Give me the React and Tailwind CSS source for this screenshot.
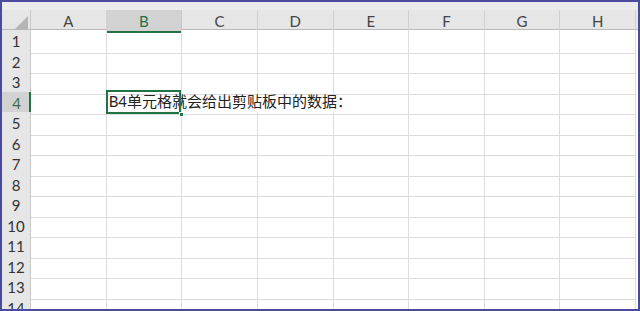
import React from "react";

const cols = ["A", "B", "C", "D", "E", "F", "G", "H"];
const rows = Array.from({ length: 14 }, (_, i) => i + 1);

const gridCols = "grid grid-cols-[29px_repeat(8,75.625px)]";

const HeaderRow = () => (
  <div className={`${gridCols} h-[20px] bg-[#e6e6e6] border-b border-[#b8b8b8]`}>
    <div className="relative border-r border-[#c8c8c8]">
      <svg className="absolute right-[2px] bottom-[3px]" width="14" height="14" viewBox="0 0 14 14">
        <polygon points="14,0 14,14 0,14" fill="#b5b5b5" />
      </svg>
    </div>
    {cols.map((c) => (
      <div
        key={c}
        className={
          c === "B"
            ? "flex items-center justify-center bg-[#d2d2d2] text-[#217346] border-r border-[#c8c8c8] shadow-[inset_0_-2px_0_#217346]"
            : "flex items-center justify-center text-[#444] border-r border-[#d0d0d0]"
        }
      >
        {c}
      </div>
    ))}
  </div>
);

const Row = ({ n }) => {
  const active = n === 4;
  return (
    <div className={`${gridCols} h-[20.5px]`}>
      <div
        className={
          active
            ? "flex items-center justify-center bg-[#d2d2d2] text-[#3d6b4e] border-b border-[#c8c8c8] shadow-[inset_-2px_0_0_#217346]"
            : "flex items-center justify-center bg-[#e6e6e6] text-[#333] border-b border-r border-[#c8c8c8]"
        }
      >
        {n}
      </div>
      {cols.map((c) => {
        const hideRight = active && (c === "C" || c === "D");
        return (
          <div
            key={c}
            className={`relative border-b border-[#dcdcdc] ${hideRight ? "" : "border-r"}`}
          >
            {active && c === "B" && (
              <>
                <span className="absolute left-[2px] top-[-1px] z-10 whitespace-nowrap text-[15px] leading-[21px] text-[#222] font-['Lato','Noto_Sans_CJK_SC',sans-serif]">
                  B4单元格就会给出剪贴板中的数据：
                </span>
                <div className="absolute -left-[1px] -top-[2px] right-0 bottom-0 z-20 border-2 border-[#217346]" />
                <div className="absolute -right-[3px] -bottom-[3px] z-30 w-[5px] h-[5px] bg-[#217346] border border-white" />
              </>
            )}
          </div>
        );
      })}
    </div>
  );
}

export default function App() {
  return (
    <div className="w-[640px] h-[311px] overflow-hidden border-2 border-[#4b4b9e] bg-white font-['Lato',sans-serif] text-[15px]">
      <div className="h-[8px] bg-[#ebebeb]" />
      <HeaderRow />
      {rows.map((n) => (
        <Row key={n} n={n} />
      ))}
    </div>
  );
}
